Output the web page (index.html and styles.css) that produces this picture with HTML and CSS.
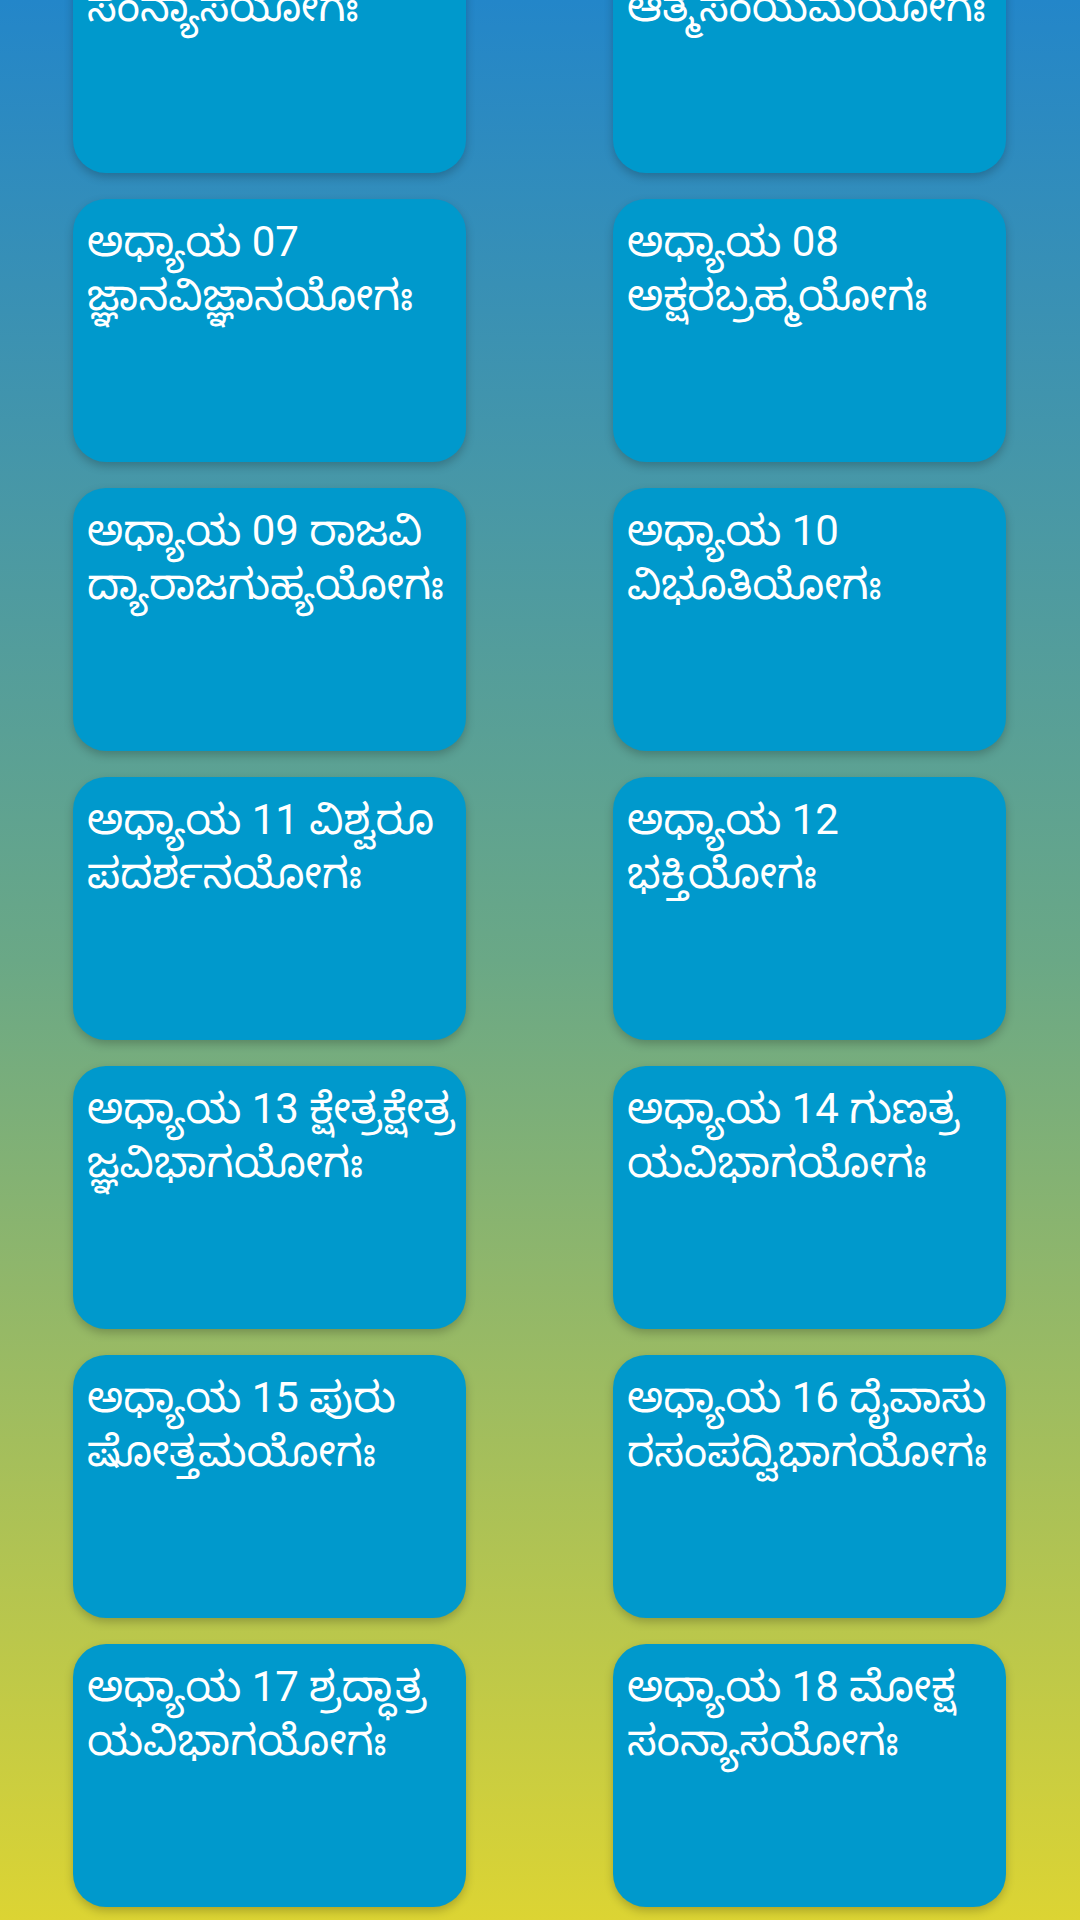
FILE: index.html
```html
<!DOCTYPE html>
<html lang="kn">
<head>
<meta charset="utf-8">
<title>ಭಗವದ್ಗೀತೆ</title>
<link rel="stylesheet" href="styles.css">
</head>
<body>
<main class="screen">
  <div class="grid">
    <div class="card"><span class="line">ಅಧ್ಯಾಯ 05 ಕರ್ಮ</span><span class="line">ಸಂನ್ಯಾಸಯೋಗಃ</span></div>
    <div class="card"><span class="line">ಅಧ್ಯಾಯ 06</span><span class="line">ಆತ್ಮಸಂಯಮಯೋಗಃ</span></div>
    <div class="card"><span class="line">ಅಧ್ಯಾಯ 07</span><span class="line">ಜ್ಞಾನವಿಜ್ಞಾನಯೋಗಃ</span></div>
    <div class="card"><span class="line">ಅಧ್ಯಾಯ 08</span><span class="line">ಅಕ್ಷರಬ್ರಹ್ಮಯೋಗಃ</span></div>
    <div class="card"><span class="line">ಅಧ್ಯಾಯ 09 ರಾಜವಿ</span><span class="line">ದ್ಯಾರಾಜಗುಹ್ಯಯೋಗಃ</span></div>
    <div class="card"><span class="line">ಅಧ್ಯಾಯ 10</span><span class="line">ವಿಭೂತಿಯೋಗಃ</span></div>
    <div class="card"><span class="line">ಅಧ್ಯಾಯ 11 ವಿಶ್ವರೂ</span><span class="line">ಪದರ್ಶನಯೋಗಃ</span></div>
    <div class="card"><span class="line">ಅಧ್ಯಾಯ 12</span><span class="line">ಭಕ್ತಿಯೋಗಃ</span></div>
    <div class="card"><span class="line">ಅಧ್ಯಾಯ 13 ಕ್ಷೇತ್ರಕ್ಷೇತ್ರ</span><span class="line">ಜ್ಞವಿಭಾಗಯೋಗಃ</span></div>
    <div class="card"><span class="line">ಅಧ್ಯಾಯ 14 ಗುಣತ್ರ</span><span class="line">ಯವಿಭಾಗಯೋಗಃ</span></div>
    <div class="card"><span class="line">ಅಧ್ಯಾಯ 15 ಪುರು</span><span class="line">ಷೋತ್ತಮಯೋಗಃ</span></div>
    <div class="card"><span class="line">ಅಧ್ಯಾಯ 16 ದೈವಾಸು</span><span class="line">ರಸಂಪದ್ವಿಭಾಗಯೋಗಃ</span></div>
    <div class="card"><span class="line">ಅಧ್ಯಾಯ 17 ಶ್ರದ್ಧಾತ್ರ</span><span class="line">ಯವಿಭಾಗಯೋಗಃ</span></div>
    <div class="card"><span class="line">ಅಧ್ಯಾಯ 18 ಮೋಕ್ಷ</span><span class="line">ಸಂನ್ಯಾಸಯೋಗಃ</span></div>
  </div>
</main>
</body>
</html>
```
FILE: styles.css
```css
html, body {
  margin: 0;
  padding: 0;
}
body {
  width: 1080px;
  height: 1920px;
  overflow: hidden;
  background: linear-gradient(to bottom, #2386c9 0%, #6aa886 50%, #dcd433 100%);
  font-family: Roboto, "Noto Sans Kannada", "Noto Sans", sans-serif;
}
.screen {
  height: 1920px;
  overflow: hidden;
}
.grid {
  display: grid;
  grid-template-columns: 393px 393px;
  grid-auto-rows: 263px;
  column-gap: 147px;
  row-gap: 26px;
  padding-left: 73px;
  margin-top: -90px;
}
.card {
  background: #0099cc;
  border-radius: 33px;
  box-shadow: 0 4px 10px rgba(0, 0, 0, 0.22);
  color: #ffffff;
  font-size: 42px;
  line-height: 54px;
  padding: 16px 14px 0;
  display: flex;
  flex-direction: column;
  white-space: nowrap;
}
.line {
  display: block;
}
```
